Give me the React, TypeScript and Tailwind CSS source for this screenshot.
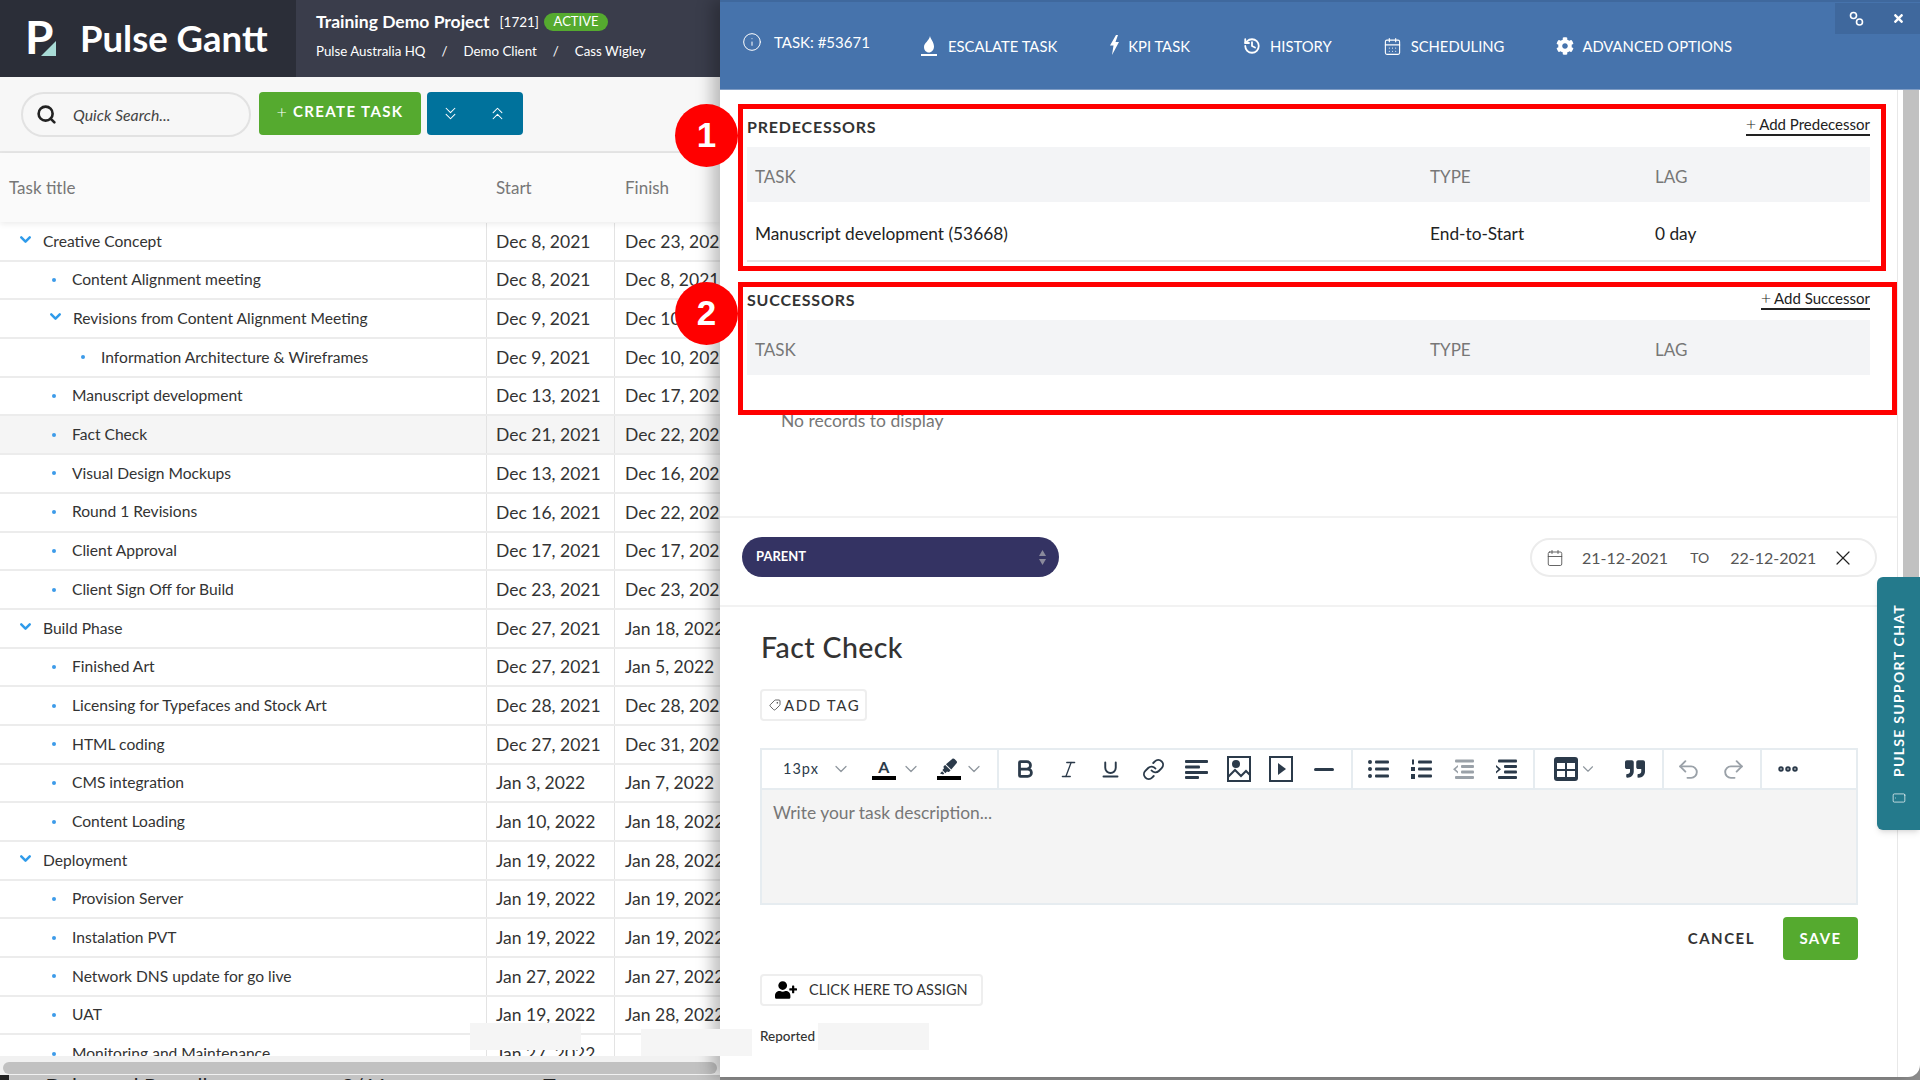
import { ChevronDown, ChevronsDown, ChevronsUp, Search, Info, History, CalendarDays, Calendar, X, Bold, Italic, Underline, Link, Tag, Undo2, Redo2, MoreHorizontal, Smartphone } from 'lucide-react';
import { FaCog, FaHighlighter, FaQuoteRight, FaTimes, FaUserPlus } from 'react-icons/fa';

const font = 'font-["Lato","Noto_Sans",sans-serif]';

type Row = { title: string; start: string; finish: string; level: number; group?: boolean; active?: boolean };

const rows: Row[] = [
  { title: 'Creative Concept', start: 'Dec 8, 2021', finish: 'Dec 23, 2021', level: 0, group: true },
  { title: 'Content Alignment meeting', start: 'Dec 8, 2021', finish: 'Dec 8, 2021', level: 1 },
  { title: 'Revisions from Content Alignment Meeting', start: 'Dec 9, 2021', finish: 'Dec 10, 2021', level: 1, group: true },
  { title: 'Information Architecture & Wireframes', start: 'Dec 9, 2021', finish: 'Dec 10, 2021', level: 2 },
  { title: 'Manuscript development', start: 'Dec 13, 2021', finish: 'Dec 17, 2021', level: 1 },
  { title: 'Fact Check', start: 'Dec 21, 2021', finish: 'Dec 22, 2021', level: 1, active: true },
  { title: 'Visual Design Mockups', start: 'Dec 13, 2021', finish: 'Dec 16, 2021', level: 1 },
  { title: 'Round 1 Revisions', start: 'Dec 16, 2021', finish: 'Dec 22, 2021', level: 1 },
  { title: 'Client Approval', start: 'Dec 17, 2021', finish: 'Dec 17, 2021', level: 1 },
  { title: 'Client Sign Off for Build', start: 'Dec 23, 2021', finish: 'Dec 23, 2021', level: 1 },
  { title: 'Build Phase', start: 'Dec 27, 2021', finish: 'Jan 18, 2022', level: 0, group: true },
  { title: 'Finished Art', start: 'Dec 27, 2021', finish: 'Jan 5, 2022', level: 1 },
  { title: 'Licensing for Typefaces and Stock Art', start: 'Dec 28, 2021', finish: 'Dec 28, 2021', level: 1 },
  { title: 'HTML coding', start: 'Dec 27, 2021', finish: 'Dec 31, 2021', level: 1 },
  { title: 'CMS integration', start: 'Jan 3, 2022', finish: 'Jan 7, 2022', level: 1 },
  { title: 'Content Loading', start: 'Jan 10, 2022', finish: 'Jan 18, 2022', level: 1 },
  { title: 'Deployment', start: 'Jan 19, 2022', finish: 'Jan 28, 2022', level: 0, group: true },
  { title: 'Provision Server', start: 'Jan 19, 2022', finish: 'Jan 19, 2022', level: 1 },
  { title: 'Instalation PVT', start: 'Jan 19, 2022', finish: 'Jan 19, 2022', level: 1 },
  { title: 'Network DNS update for go live', start: 'Jan 27, 2022', finish: 'Jan 27, 2022', level: 1 },
  { title: 'UAT', start: 'Jan 19, 2022', finish: 'Jan 28, 2022', level: 1 },
  { title: 'Monitoring and Maintenance', start: 'Jan 27, 2022', finish: '', level: 1 },
];

function TaskRow({ row }: { row: Row }) {
  const pad = row.level === 0 ? 'pl-[17px]' : row.level === 1 ? (row.group ? 'pl-[47px]' : 'pl-[52px]') : 'pl-[81px]';
  return (
    <div className={`grid grid-cols-[487px_128px_1fr] h-[38.7px] border-b-2 border-[#ececec] text-[#333] ${row.active ? 'bg-[#f5f5f5]' : ''}`}>
      <div className={`flex items-center border-r border-[#e3e3e3] ${pad}`}>
        {row.group ? (
          <ChevronDown size={17} strokeWidth={3.5} className="text-[#2f9bea] mr-[9px] -mt-1" />
        ) : (
          <span className="w-1 h-1 rounded-full bg-[#3d9be9] mr-[16px]" />
        )}
        <span className="text-[15.6px]">{row.title}</span>
      </div>
      <div className="flex items-center border-r border-[#e3e3e3] pl-[9px] pt-[1px] text-[17.5px] whitespace-nowrap">{row.start}</div>
      <div className="flex items-center pl-[10px] pt-[1px] text-[17.5px] whitespace-nowrap">{row.finish}</div>
    </div>
  );
}

function HeadRow() {
  return (
    <div className="grid grid-cols-[682px_225px_1fr] h-[55px] items-center bg-[#f3f4f6] pl-2 pt-[5px] text-[#777] text-[17px]">
      <span>TASK</span>
      <span className="-ml-[7px]">TYPE</span>
      <span className="-ml-[7px]">LAG</span>
    </div>
  );
}

function ToolBtn({ children }: { children: React.ReactNode }) {
  return <div className="w-[42.7px] h-full flex items-center justify-center text-[#2b3a4a]">{children}</div>;
}

export default function App() {
  return (
    <div className={`relative flex w-full h-screen overflow-hidden bg-[#8e8e8e] ${font}`}>
      {/* Left: gantt list */}
      <div className="w-[720px] h-full flex flex-col shrink-0 bg-white">
        <header className="h-[77px] flex shrink-0 bg-[#3a3d4b] text-white">
          <div className="w-[296px] bg-[#2b2e38] flex items-center pl-[25px]">
            <div className="relative w-[31px] h-[40px] -mt-[3px]">
              <span className="block text-[46px] leading-[40px] font-bold">P</span>
              <svg width="15" height="15" viewBox="0 0 15 15" className="absolute right-0 bottom-[1px]">
                <polygon points="15,0 15,15 0,15" fill="#a8dbd6" />
              </svg>
            </div>
            <span className="ml-[24px] text-[36.5px] font-bold leading-none whitespace-nowrap">Pulse Gantt</span>
          </div>
          <div className="pl-5 pt-[12px]">
            <div className="flex items-center h-[20px]">
              <span className="text-[17.5px] font-bold">Training Demo Project</span>
              <span className="ml-[10px] text-[13.5px]">[1721]</span>
              <span className="ml-[5px] h-[18px] w-[64px] rounded-full bg-[#55aa2f] text-[13px] flex items-center justify-center">ACTIVE</span>
            </div>
            <div className="flex items-center mt-[10px] text-[13.3px] gap-[16px]">
              <span>Pulse Australia HQ</span>
              <span>/</span>
              <span>Demo Client</span>
              <span>/</span>
              <span>Cass Wigley</span>
            </div>
          </div>
        </header>

        <div className="h-[76px] shrink-0 flex items-start pt-[15px] pl-[21px] bg-[#f7f7f7] border-b-2 border-[#e6e6e6]">
          <div className="w-[230px] h-[45px] rounded-full border-2 border-[#e2e2e2] bg-[#f7f7f7] flex items-center pl-[13px]">
            <Search size={21} strokeWidth={3} className="text-[#222]" />
            <span className="ml-[16px] mt-[1px] italic text-[15.8px] text-[#444]">Quick Search...</span>
          </div>
          <button className="ml-2 w-[162px] h-[43px] rounded-sm bg-[#55aa2f] text-white flex items-center justify-center pb-1">
            <span className="text-[18px] font-light mr-[6px]">+</span>
            <span className="text-[15px] font-bold tracking-[1.4px]">CREATE TASK</span>
          </button>
          <div className="ml-[6px] w-[96px] h-[43px] rounded-sm bg-[#00729c] text-white flex items-center justify-between pl-[13px] pr-[15px]">
            <ChevronsDown size={21} strokeWidth={1.2} />
            <ChevronsUp size={21} strokeWidth={1.2} />
          </div>
        </div>

        <div className="h-[69px] shrink-0 grid grid-cols-[496px_129px_1fr] items-center pt-[1px] bg-[#fafafa] shadow-[0_2px_6px_rgba(0,0,0,0.08)] text-[17px] text-[#777] relative">
          <span className="pl-[9px]">Task title</span>
          <span>Start</span>
          <span>Finish</span>
        </div>

        <div className="flex-1 min-h-0 overflow-hidden pt-[1px]">
          {rows.map((r) => (
            <TaskRow key={r.title} row={r} />
          ))}
        </div>

        <div className="h-[19px] shrink-0 bg-[#f1f1f1] flex items-end px-[3px] pb-[1px]">
          <div className="w-full h-[12px] rounded-full bg-[#c1c1c1]" />
        </div>
        <div className="h-[5px] shrink-0 overflow-hidden bg-[#c4c4c4] flex text-[21px] leading-[22px] text-[#222]">
          <span className="w-[10px] h-full bg-[#222] mr-[36px]" />
          <span className="w-[316px]">Dylan and Russell</span>
          <span className="w-[215px]">2/11</span>
          <span>Type a new message</span>
        </div>
      </div>

      {/* Right: task panel */}
      <div className="w-[1200px] h-[1077px] shrink-0 flex flex-col bg-white rounded-br-xl shadow-[-8px_0_16px_rgba(0,0,0,0.25)] relative text-[#222]">
        <div className="h-[90px] shrink-0 bg-[#4673ac] border-t-2 border-[#3f689d] border-b border-b-[#7f9cc4] text-white text-[14.8px] relative">
          <div className="flex items-center h-[40px] absolute left-[22px] top-[20px]">
            <Info size={20} strokeWidth={1.2} />
            <span className="ml-[12px] text-[15px]">TASK: #53671</span>
          </div>
          <div className="flex items-center absolute left-[201px] top-[33px] h-[22px]">
            <span className="flex flex-col items-center mr-[11px] w-4">
              <svg width="12" height="17" viewBox="0 0 12 17" fill="white">
                <path d="M7 0C7.5 3 11 6 11 10.5 11 14 8.5 16.5 6 16.5 3 16.5 1 14 1 11 1 7 6 5 7 0Z" />
              </svg>
              <span className="w-4 h-[2px] bg-white mt-[1px]" />
            </span>
            <span>ESCALATE TASK</span>
            <svg width="11" height="20" viewBox="0 0 11 20" fill="white" className="ml-[52px] mr-[8px] -mt-[2px]">
              <path d="M7 0L1 10.5h3.5L3 20 10 7H6.5L9 0z" />
            </svg>
            <span>KPI TASK</span>
            <History size={18} strokeWidth={2.4} className="ml-[53px] mr-[9px]" />
            <span>HISTORY</span>
            <CalendarDays size={19} strokeWidth={1.4} className="ml-[51px] mr-[9px]" />
            <span>SCHEDULING</span>
            <FaCog size={18} className="ml-[52px] mr-[8px]" />
            <span>ADVANCED OPTIONS</span>
          </div>
          <div className="absolute right-0 top-[1px] w-[85px] h-[31px] bg-[#3f689d] flex items-center pl-[14px] gap-[28px]">
            <svg width="15" height="16" viewBox="0 0 15 16" fill="none" stroke="white" strokeWidth="1.6">
              <circle cx="4.5" cy="4.5" r="3" />
              <circle cx="10.5" cy="11" r="3" />
            </svg>
            <FaTimes size={13} />
          </div>
        </div>

        <div className="flex-1 min-h-0 flex">
          <div className="w-[1178px] border-r border-[#e8e8e8]">
            <div className="pl-[27px] pr-[27px]">
              <div className="h-[57px] flex items-start justify-between pt-[27px]">
                <span className="text-[16px] leading-[20px] font-bold tracking-[0.8px] text-[#333]">PREDECESSORS</span>
                <span className="-mt-[3px] text-[15px] leading-[20px] border-b-2 border-[#222]">
                  <span className="text-[18px] leading-none font-light mr-[3px]">+</span>Add Predecessor
                </span>
              </div>
              <HeadRow />
              <div className="grid grid-cols-[682px_225px_1fr] h-[60px] items-center pl-2 pt-[6px] text-[17.3px] border-b-2 border-[#e5e5e5]">
                <span>Manuscript development (53668)</span>
                <span className="-ml-[7px]">End-to-Start</span>
                <span className="-ml-[7px]">0 day</span>
              </div>

              <div className="h-[58px] flex items-start justify-between pt-[28px]">
                <span className="text-[16px] leading-[20px] font-bold tracking-[0.8px] text-[#333]">SUCCESSORS</span>
                <span className="-mt-[2px] text-[15px] leading-[20px] border-b-2 border-[#222]">
                  <span className="text-[18px] leading-none font-light mr-[3px]">+</span>Add Successor
                </span>
              </div>
              <HeadRow />
              <div className="mt-[36px] pl-[34px] text-[17.5px] leading-[20px] text-[#777]">No records to display</div>
            </div>

            <div className="mt-[85px] h-[91px] border-y-2 border-[#f2f2f2] flex items-start justify-between pt-[20px] pl-[22px] pr-[20px]">
              <div className="w-[317px] h-[40px] rounded-full bg-[#343363] text-white flex items-center justify-between pl-[14px] pr-[13px] -mt-[1px]">
                <span className="text-[13px] font-bold">PARENT</span>
                <svg width="7" height="15" viewBox="0 0 7 15" fill="#8a8a9c">
                  <polygon points="3.5,0 7,6 0,6" />
                  <polygon points="0,9 7,9 3.5,15" />
                </svg>
              </div>
              <div className="w-[347px] h-[39px] rounded-full border-2 border-[#ececec] flex items-center pl-[14px] text-[16px] text-[#555]">
                <Calendar size={18} strokeWidth={1.2} />
                <span className="ml-[18px]">21-12-2021</span>
                <span className="ml-[22px] text-[14px]">TO</span>
                <span className="ml-[21px]">22-12-2021</span>
                <X size={24} strokeWidth={1.2} className="ml-[15px] text-[#222]" />
              </div>
            </div>

            <div className="pl-[40px] pr-[39px]">
              <h1 className="mt-[23px] text-[28.5px] leading-[34px] font-medium tracking-[0.4px] text-[#333] pl-[1px]">Fact Check</h1>
              <div className="mt-[25px] w-[107px] h-[32px] rounded-sm border-2 border-[#eeeeee] flex items-center pl-[7px] text-[15px] tracking-[1.6px] text-[#333]">
                <Tag size={12} strokeWidth={1.5} className="rotate-90 mr-[3px]" />
                ADD TAG
              </div>

              <div className="mt-[27px] h-[42px] border-2 border-[#e6ecf0] flex">
                <div className="w-[237px] h-full border-r-2 border-[#e6ecf0] flex items-center pl-[21px] text-[#2b3a4a]">
                  <span className="text-[14.5px] tracking-[1px]">13px</span>
                  <ChevronDown size={20} strokeWidth={1.5} className="ml-[12px] text-[#8f979e]" />
                  <span className="ml-[21px] flex flex-col items-center w-[24px] text-[16px] leading-[18px] font-bold">
                    A
                    <span className="w-[24px] h-[4px] bg-black" />
                  </span>
                  <ChevronDown size={20} strokeWidth={1.5} className="ml-[5px] text-[#8f979e]" />
                  <span className="ml-[16px] flex flex-col items-center w-[24px]">
                    <FaHighlighter size={17} />
                    <span className="w-[24px] h-[4px] bg-black mt-[1px]" />
                  </span>
                  <ChevronDown size={20} strokeWidth={1.5} className="ml-[3px] text-[#8f979e]" />
                </div>
                <div className="w-[354px] h-full border-r-2 border-[#e6ecf0] flex items-center pl-[5px]">
                  <ToolBtn><Bold size={22} strokeWidth={3} /></ToolBtn>
                  <ToolBtn><Italic size={21} strokeWidth={1.5} /></ToolBtn>
                  <ToolBtn><Underline size={21} strokeWidth={2.2} /></ToolBtn>
                  <ToolBtn><Link size={23} strokeWidth={2} /></ToolBtn>
                  <ToolBtn>
                    <svg width="23" height="20" viewBox="0 0 23 20" fill="currentColor">
                      <rect y="1" width="23" height="3" rx="1" /><rect y="6.5" width="15" height="3" rx="1" /><rect y="12" width="23" height="3" rx="1" /><rect y="17" width="14" height="3" rx="1" />
                    </svg>
                  </ToolBtn>
                  <ToolBtn>
                    <svg width="24" height="26" viewBox="0 0 24 26" fill="none" stroke="currentColor" strokeWidth="2">
                      <rect x="1" y="1" width="22" height="24" />
                      <circle cx="9" cy="8" r="3" fill="currentColor" />
                      <path d="M1 21l7-7 6 6 5-5 4 4" />
                    </svg>
                  </ToolBtn>
                  <ToolBtn>
                    <svg width="24" height="26" viewBox="0 0 24 26" fill="none" stroke="currentColor" strokeWidth="2">
                      <rect x="1" y="1" width="22" height="24" />
                      <path d="M9 7l8 6-8 6z" fill="currentColor" stroke="none" />
                    </svg>
                  </ToolBtn>
                  <ToolBtn>
                    <span className="w-[20px] h-[3px] rounded-sm bg-[#2b3a4a]" />
                  </ToolBtn>
                </div>
                <div className="w-[182px] h-full border-r-2 border-[#e6ecf0] flex items-center pl-[4px]">
                  <ToolBtn>
                    <svg width="21" height="20" viewBox="0 0 21 20" fill="currentColor">
                      <circle cx="2" cy="3" r="2" /><circle cx="2" cy="10" r="2" /><circle cx="2" cy="17" r="2" />
                      <rect x="7" y="1.5" width="14" height="3" rx="1" /><rect x="7" y="8.5" width="14" height="3" rx="1" /><rect x="7" y="15.5" width="14" height="3" rx="1" />
                    </svg>
                  </ToolBtn>
                  <ToolBtn>
                    <svg width="21" height="20" viewBox="0 0 21 20" fill="currentColor">
                      <rect x="1" y="0.5" width="2" height="5" /><rect y="8" width="4" height="4" /><rect y="15" width="4" height="5" />
                      <rect x="7" y="1.5" width="14" height="3" rx="1" /><rect x="7" y="8.5" width="14" height="3" rx="1" /><rect x="7" y="15.5" width="14" height="3" rx="1" />
                    </svg>
                  </ToolBtn>
                  <ToolBtn>
                    <svg width="21" height="21" viewBox="0 0 21 21" fill="#9aa1a8">
                      <rect x="2" y="0.5" width="19" height="3" rx="1" /><rect x="8" y="6" width="13" height="3" rx="1" /><rect x="8" y="11.5" width="13" height="3" rx="1" /><rect x="2" y="17" width="19" height="3" rx="1" />
                      <path d="M5 6L0 10.2l5 4.3v-2L2.6 10.2 5 8z" />
                    </svg>
                  </ToolBtn>
                  <ToolBtn>
                    <svg width="21" height="21" viewBox="0 0 21 21" fill="currentColor">
                      <rect x="2" y="0.5" width="19" height="3" rx="1" /><rect x="8" y="6" width="13" height="3" rx="1" /><rect x="8" y="11.5" width="13" height="3" rx="1" /><rect x="2" y="17" width="19" height="3" rx="1" />
                      <path d="M0 6l5 4.2-5 4.3v-2l2.4-2.3L0 8z" />
                    </svg>
                  </ToolBtn>
                </div>
                <div className="w-[129px] h-full border-r-2 border-[#e6ecf0] flex items-center pl-[19px] text-[#2b3a4a]">
                  <svg width="24" height="24" viewBox="0 0 24 24">
                    <rect width="24" height="24" rx="3" fill="currentColor" />
                    <rect x="3" y="6" width="8" height="6" fill="white" /><rect x="13" y="6" width="8" height="6" fill="white" />
                    <rect x="3" y="14" width="8" height="6" fill="white" /><rect x="13" y="14" width="8" height="6" fill="white" />
                  </svg>
                  <ChevronDown size={18} strokeWidth={1.5} className="ml-[1px] text-[#8f979e]" />
                  <FaQuoteRight size={20} className="ml-[28px]" />
                </div>
                <div className="w-[98px] h-full border-r-2 border-[#e6ecf0] flex items-center pl-[12px] gap-[20px] text-[#9aa1a8]">
                  <Undo2 size={25} strokeWidth={1.8} />
                  <Redo2 size={25} strokeWidth={1.8} />
                </div>
                <div className="flex-1 flex items-center pl-[14px] text-[#2b3a4a]">
                  <MoreHorizontal size={24} strokeWidth={3.5} />
                </div>
              </div>

              <div className="h-[115px] bg-[#f4f4f4] border-2 border-t-0 border-[#e6ecf0] pl-[11px] pt-[13px] text-[17.4px] leading-[20px] text-[#777]">
                Write your task description...
              </div>

              <div className="mt-[12px] flex items-center justify-end">
                <span className="text-[15px] font-bold tracking-[1.5px] text-[#333]">CANCEL</span>
                <button className="ml-[28px] w-[75px] h-[43px] rounded-sm bg-[#55aa2f] text-white text-[15px] font-bold tracking-[1.4px]">SAVE</button>
              </div>

              <div className="mt-[14px] w-[223px] h-[32px] rounded-sm border-2 border-[#eeeeee] flex items-center pl-[13px] text-[14.5px] text-[#333]">
                <FaUserPlus size={22} className="text-black mr-[12px]" />
                CLICK HERE TO ASSIGN
              </div>

              <div className="mt-[20px] text-[13.5px] leading-[20px] font-medium text-[#333]">Reported</div>
            </div>
          </div>
          <div className="flex-1 flex justify-center">
            <div className="w-[16px] ml-[4px] h-[520px] bg-[#c1c1c1]" />
          </div>
        </div>
      </div>

      {/* Blanked-out patches */}
      <div className="absolute left-[470px] top-[1023px] w-[111px] h-[27px] bg-[#f5f5f5]" />
      <div className="absolute left-[641px] top-[1029px] w-[111px] h-[27px] bg-[#f5f5f5]" />
      <div className="absolute left-[818px] top-[1023px] w-[111px] h-[27px] bg-[#f5f5f5]" />

      {/* Support chat tab */}
      <div className="absolute left-[1877px] top-[577px] w-[43px] h-[253px] bg-[#247a8c] rounded-l-md shadow-md text-white flex flex-col items-center justify-end pb-[25px]">
        <span className="[writing-mode:vertical-rl] rotate-180 text-[14px] font-bold tracking-[1.3px] whitespace-nowrap">PULSE SUPPORT CHAT</span>
        <Smartphone size={14} strokeWidth={1.2} className="mt-[14px] rotate-90" />
      </div>

      {/* Callouts */}
      <div className="absolute left-[738px] top-[104px] w-[1148px] h-[167px] border-[5px] border-[#ff0000]" />
      <div className="absolute left-[738px] top-[282px] w-[1159px] h-[133px] border-[5px] border-[#ff0000]" />
      <div className="absolute left-[675px] top-[104px] w-[63px] h-[63px] rounded-full bg-[#ff0000] text-white flex items-center justify-center font-['Liberation_Sans',sans-serif] font-bold text-[35px]">1</div>
      <div className="absolute left-[675px] top-[282px] w-[63px] h-[63px] rounded-full bg-[#ff0000] text-white flex items-center justify-center font-['Liberation_Sans',sans-serif] font-bold text-[35px]">2</div>
    </div>
  );
}
